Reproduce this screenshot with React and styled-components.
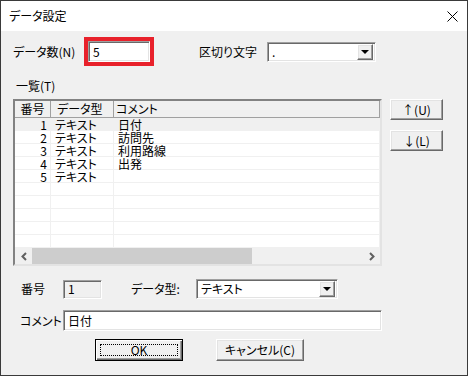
import React from "react";
import styled, { createGlobalStyle } from "styled-components";

const GlobalStyle = createGlobalStyle`
  html, body {
    margin: 0;
    padding: 0;
    background: #ffffff;
  }
  body {
    font-family: "Noto Sans CJK JP", "Noto Sans", sans-serif;
    font-size: 12px;
    color: #000;
    font-feature-settings: "palt";
  }
`;

const rows = [
  { no: 1, type: "テキスト", comment: "日付" },
  { no: 2, type: "テキスト", comment: "訪問先" },
  { no: 3, type: "テキスト", comment: "利用路線" },
  { no: 4, type: "テキスト", comment: "出発" },
  { no: 5, type: "テキスト", comment: "" },
  {},
  {},
  {},
  {},
  {},
];

const App = () => {
  return (
    <>
      <GlobalStyle />
      <Window>
        <TitleBar>
          <Title>データ設定</Title>
          <CloseIcon width="11" height="11" viewBox="0 0 11 11">
            <path d="M0.5 0.5 L10.5 10.5 M10.5 0.5 L0.5 10.5" stroke="#000" strokeWidth="1" />
          </CloseIcon>
        </TitleBar>

        <Body>
          <TopRow>
            <Label width={71}>データ数(N)</Label>
            <RedFrame>
              <Field bg="#fff" width={62} height={21}>5</Field>
            </RedFrame>
            <Label width={68} gap={45}>区切り文字</Label>
            <Combo width={109}>
              <ComboText>.</ComboText>
              <DropButton>
                <Triangle />
              </DropButton>
            </Combo>
          </TopRow>

          <SectionLabel>一覧(T)</SectionLabel>

          <ListRow>
            <ListView>
              <Header>
                <HeaderCell width={36} align="center">番号</HeaderCell>
                <HeaderCell width={63} pad={6}>データ型</HeaderCell>
                <HeaderCell grow pad={2}>コメント</HeaderCell>
              </Header>
              <Rows>
                {rows.map((r, i) => (
                  <Row key={i} selected={i === 0}>
                    <Cell width={36} align="right" pad={3}>{r.no}</Cell>
                    <Cell width={63} pad={4}>{r.type}</Cell>
                    <Cell grow pad={4}>{r.comment}</Cell>
                  </Row>
                ))}
              </Rows>
              <HScroll>
                <ScrollArrow>
                  <svg width="8" height="9" viewBox="0 0 8 9">
                    <path d="M6 1 L2.5 4.5 L6 8" stroke="#606060" strokeWidth="2" fill="none" />
                  </svg>
                </ScrollArrow>
                <Thumb />
                <Track />
                <ScrollArrow>
                  <svg width="8" height="9" viewBox="0 0 8 9">
                    <path d="M2 1 L5.5 4.5 L2 8" stroke="#606060" strokeWidth="2" fill="none" />
                  </svg>
                </ScrollArrow>
              </HScroll>
            </ListView>

            <SideButtons>
              <Button width={53} height={21}>↑(U)</Button>
              <Button width={53} height={21}>↓(L)</Button>
            </SideButtons>
          </ListRow>

          <FormRow top={13} height={20}>
            <Label width={50} indent={8}>番号</Label>
            <Field bg="#f0f0f0" width={39} height={19}>1</Field>
            <Label width={65} gap={29}>データ型:</Label>
            <Combo width={142}>
              <ComboText>テキスト</ComboText>
              <DropButton>
                <Triangle />
              </DropButton>
            </Combo>
          </FormRow>

          <FormRow top={11} height={21}>
            <Label width={50} indent={7}>コメント</Label>
            <Field bg="#fff" width={319} height={21}>日付</Field>
          </FormRow>

          <ButtonRow>
            <DefaultButton>
              <FocusRect>OK</FocusRect>
            </DefaultButton>
            <Button width={88} height={22}>キャンセル(C)</Button>
          </ButtonRow>
        </Body>
      </Window>
    </>
  );
};

const Window = styled.div`
  width: 468px;
  height: 376px;
  box-sizing: border-box;
  border: 1px solid #3a3a3a;
  display: flex;
  flex-direction: column;
  overflow: hidden;
`;

const TitleBar = styled.div`
  height: 30px;
  background: #fff;
  display: flex;
  align-items: center;
  justify-content: space-between;
  padding: 0 9px 0 8px;
`;

const Title = styled.span`
  font-size: 12px;
  line-height: 12px;
`;

const CloseIcon = styled.svg`
  display: block;
`;

const Body = styled.div`
  flex: 1;
  background: #f0f0f0;
  padding: 6px 0 0 12px;
  display: flex;
  flex-direction: column;
`;

const TopRow = styled.div`
  display: flex;
  align-items: center;
  height: 29px;
`;

const Label = styled.span`
  width: ${(p) => p.width}px;
  margin-left: ${(p) => p.gap || 0}px;
  padding-left: ${(p) => p.indent || 0}px;
  box-sizing: border-box;
  flex-shrink: 0;
  white-space: nowrap;
  line-height: 14px;
`;

const RedFrame = styled.div`
  width: 70px;
  height: 29px;
  box-sizing: border-box;
  border: 4px solid #e8212b;
  display: flex;
`;

const sunken = `
  box-sizing: border-box;
  border: 1px solid;
  border-color: #a0a0a0 #fff #fff #a0a0a0;
  box-shadow: inset 1px 1px #696969, inset -1px -1px #e3e3e3;
`;

const Field = styled.div`
  ${sunken}
  width: ${(p) => p.width}px;
  height: ${(p) => p.height}px;
  background: ${(p) => p.bg};
  padding-left: 4px;
  display: flex;
  align-items: center;
  flex-shrink: 0;
  line-height: 14px;
`;

const Combo = styled.div`
  ${sunken}
  width: ${(p) => p.width}px;
  height: 20px;
  background: #fff;
  display: flex;
  align-items: center;
  padding: 2px 2px 2px 4px;
  flex-shrink: 0;
`;

const ComboText = styled.span`
  flex: 1;
  line-height: 14px;
`;

const raised = `
  box-sizing: border-box;
  background: #f0f0f0;
  border: 1px solid;
  border-color: #fff #696969 #696969 #fff;
  box-shadow: inset -1px -1px #a0a0a0, inset 1px 1px #e3e3e3;
`;

const DropButton = styled.div`
  ${raised}
  width: 16px;
  height: 16px;
  display: flex;
  align-items: center;
  justify-content: center;
`;

const Triangle = styled.span`
  width: 0;
  height: 0;
  border-left: 4px solid transparent;
  border-right: 4px solid transparent;
  border-top: 4px solid #000;
`;

const SectionLabel = styled.div`
  margin-top: 14px;
  padding-left: 3px;
  line-height: 12px;
  height: 12px;
`;

const ListRow = styled.div`
  margin-top: 7px;
  display: flex;
  align-items: flex-start;
`;

const ListView = styled.div`
  width: 369px;
  height: 167px;
  box-sizing: border-box;
  border: 2px solid;
  border-color: #828282 #e3e3e3 #e3e3e3 #828282;
  background: #fff;
  display: flex;
  flex-direction: column;
  overflow: hidden;
`;

const Header = styled.div`
  height: 17px;
  box-sizing: border-box;
  display: flex;
  background: #f0f0f0;
  border-bottom: 1px solid #a0a0a0;
`;

const HeaderCell = styled.div`
  width: ${(p) => (p.grow ? "auto" : `${p.width}px`)};
  flex: ${(p) => (p.grow ? 1 : "none")};
  box-sizing: border-box;
  padding-left: ${(p) => p.pad || 0}px;
  text-align: ${(p) => p.align || "left"};
  border-right: 1px solid #a0a0a0;
  line-height: 16px;
  white-space: nowrap;
`;

const Rows = styled.div`
  height: 130px;
  display: flex;
  flex-direction: column;
`;

const Row = styled.div`
  height: 13px;
  box-sizing: border-box;
  display: flex;
  background: ${(p) => (p.selected ? "#f0f0f0" : "#fff")};
  border-bottom: 1px solid #f0f0f0;
`;

const Cell = styled.div`
  width: ${(p) => (p.grow ? "auto" : `${p.width}px`)};
  flex: ${(p) => (p.grow ? 1 : "none")};
  box-sizing: border-box;
  padding: ${(p) => (p.align === "right" ? `0 ${p.pad}px 0 0` : `0 0 0 ${p.pad}px`)};
  text-align: ${(p) => p.align || "left"};
  border-right: 1px solid #f0f0f0;
  line-height: 13px;
  white-space: nowrap;
`;

const HScroll = styled.div`
  height: 16px;
  display: flex;
  background: #f0f0f0;
`;

const ScrollArrow = styled.div`
  width: 17px;
  display: flex;
  align-items: center;
  justify-content: center;
  svg {
    display: block;
  }
`;

const Thumb = styled.div`
  width: 220px;
  background: #cdcdcd;
`;

const Track = styled.div`
  flex: 1;
`;

const SideButtons = styled.div`
  margin-left: 8px;
  display: flex;
  flex-direction: column;
  gap: 10px;
`;

const Button = styled.div`
  ${raised}
  width: ${(p) => p.width}px;
  height: ${(p) => p.height}px;
  display: flex;
  align-items: center;
  justify-content: center;
  white-space: nowrap;
  line-height: 14px;
`;

const FormRow = styled.div`
  margin-top: ${(p) => p.top}px;
  height: ${(p) => p.height}px;
  display: flex;
  align-items: center;
`;

const ButtonRow = styled.div`
  margin-top: 8px;
  padding-left: 82px;
  display: flex;
  gap: 33px;
`;

const DefaultButton = styled.div`
  box-sizing: border-box;
  width: 88px;
  height: 22px;
  background: #f0f0f0;
  border: 1px solid #000;
  box-shadow: inset 1px 1px #fff, inset -1px -1px #696969, inset -2px -2px #a0a0a0;
  padding: 4px 4px 4px 4px;
  display: flex;
`;

const FocusRect = styled.div`
  flex: 1;
  border: 1px dotted #000;
  display: flex;
  align-items: center;
  justify-content: center;
  line-height: 12px;
`;

export default App;
